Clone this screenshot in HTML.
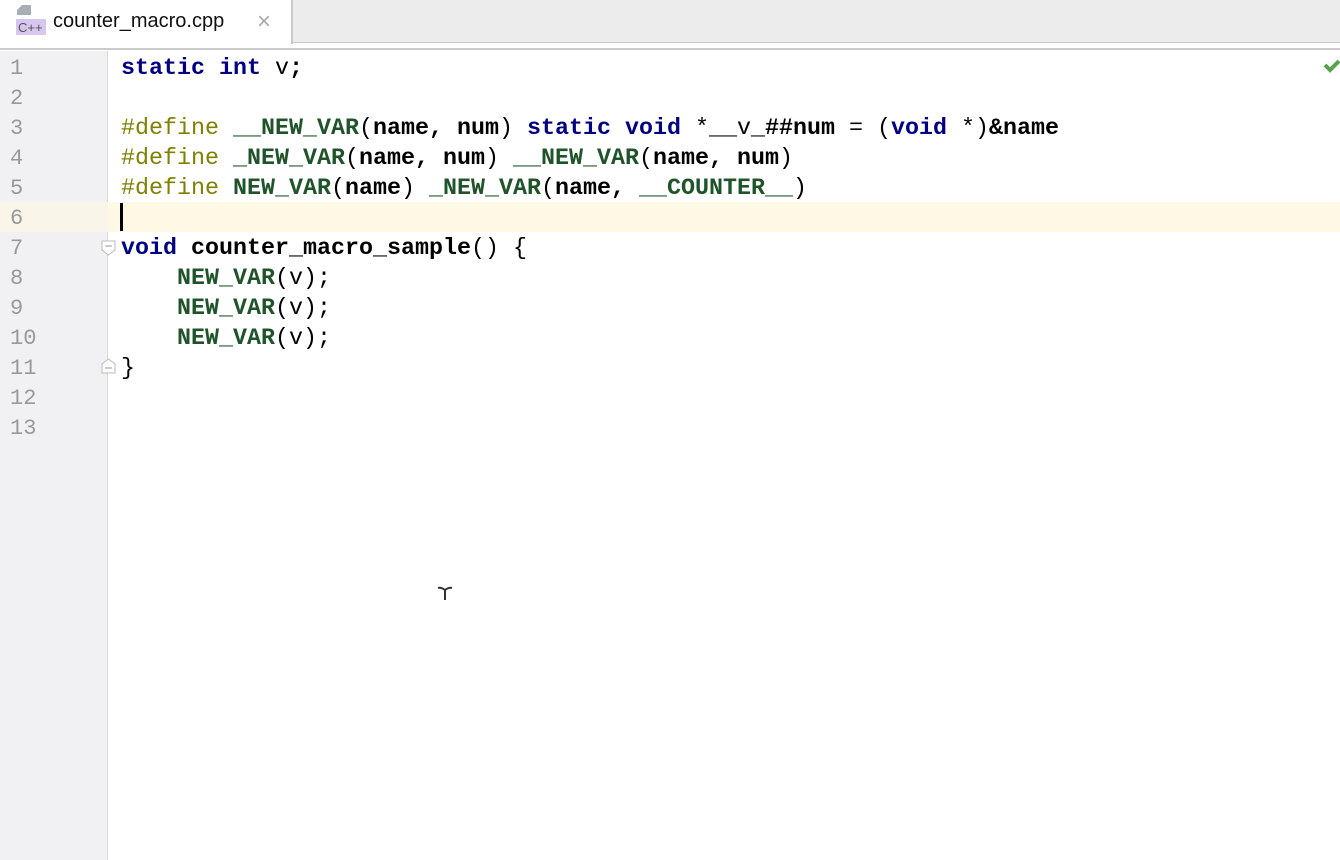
<!DOCTYPE html>
<html><head><meta charset="utf-8"><style>
*{margin:0;padding:0;box-sizing:border-box}
body{width:1340px;height:860px;overflow:hidden;background:#fff;position:relative;font-family:"Liberation Mono",monospace}
.tabbar{position:absolute;left:0;top:0;width:1340px;height:43px;background:#ececec;border-bottom:1px solid #c9c9c9}
.tab{position:absolute;left:0;top:0;width:293px;height:44px;background:#fff;border-right:2px solid #c9c9c9}
.strip{position:absolute;left:0;top:43px;width:1340px;height:7px;background:#fff;border-bottom:2px solid #cbcbcb}
.tab .name{position:absolute;left:53px;top:10px;font:20px "Liberation Sans",sans-serif;color:#111}
.tab .x{position:absolute;left:257px;top:8px;font:24px "Liberation Sans",sans-serif;color:#aaa}
.gutter{position:absolute;left:0;top:51px;width:108px;height:809px;background:#f1f1f3;border-right:1px solid #d8d8d8}
.cur{position:absolute;left:0;top:202px;width:1340px;height:30px;background:#fef8e5}
.gcur{position:absolute;left:0;top:202px;width:108px;height:30px;background:#f9f5e8}
.ln{position:absolute;left:10px;font-size:22px;color:#999;line-height:30px}
.code{position:absolute;left:121px;top:54px;font-size:23.33px;line-height:30px;white-space:pre;color:#000;font-weight:bold}
.k{color:#000080}.d{color:#808000;font-weight:normal}.m{color:#1f542b}.n{font-weight:normal}
.caret{position:absolute;left:120px;top:203px;width:3px;height:28px;background:#000}
.fold{position:absolute;left:101px;width:15px;height:16px}
</style></head><body>
<div class="tabbar"></div>
<div class="strip"></div>
<div class="tab">
<svg style="position:absolute;left:16px;top:4px" width="30" height="32"><polygon points="6,1 15,1 15,11 1,11 1,6" fill="#a9aeb3"/><rect x="0" y="15" width="30" height="16" fill="#d7c6f0"/><text x="2" y="28" font-family="Liberation Sans" font-size="13" fill="#555">C++</text></svg>
<span class="name">counter_macro.cpp</span><span class="x">×</span></div>
<div class="gutter"></div>
<div class="cur"></div><div class="gcur"></div>
<div class="ln" style="top:54px">1</div><div class="ln" style="top:84px">2</div><div class="ln" style="top:114px">3</div><div class="ln" style="top:144px">4</div><div class="ln" style="top:174px">5</div><div class="ln" style="top:204px">6</div><div class="ln" style="top:234px">7</div><div class="ln" style="top:264px">8</div><div class="ln" style="top:294px">9</div><div class="ln" style="top:324px">10</div><div class="ln" style="top:354px">11</div><div class="ln" style="top:384px">12</div><div class="ln" style="top:414px">13</div>
<svg class="fold" style="top:240px" viewBox="0 0 15 16"><path d="M1 1H14V10L7.5 15L1 10Z" fill="#fff" stroke="#bbb"/><path d="M4 6H11" stroke="#999"/></svg>
<svg class="fold" style="top:358px" viewBox="0 0 15 16"><path d="M1 15H14V6L7.5 1L1 6Z" fill="#fff" stroke="#bbb"/><path d="M4 10H11" stroke="#999"/></svg>
<div class="code"><span class="k">static</span> <span class="k">int</span> <span class="n">v</span>;

<span class="d">#define</span> <span class="m">__NEW_VAR</span><span class="n">(</span>name, num<span class="n">)</span> <span class="k">static</span> <span class="k">void</span> <span class="n">*__v_</span>##num <span class="n">=</span> <span class="n">(</span><span class="k">void</span> <span class="n">*)</span>&amp;name
<span class="d">#define</span> <span class="m">_NEW_VAR</span><span class="n">(</span>name, num<span class="n">)</span> <span class="m">__NEW_VAR</span><span class="n">(</span>name, num<span class="n">)</span>
<span class="d">#define</span> <span class="m">NEW_VAR</span><span class="n">(</span>name<span class="n">)</span> <span class="m">_NEW_VAR</span><span class="n">(</span>name, <span class="m">__COUNTER__</span><span class="n">)</span>

<span class="k">void</span> counter_macro_sample<span class="n">() {</span>
    <span class="m">NEW_VAR</span><span class="n">(v);</span>
    <span class="m">NEW_VAR</span><span class="n">(v);</span>
    <span class="m">NEW_VAR</span><span class="n">(v);</span>
<span class="n">}</span>
</div>
<div class="caret"></div>
<svg style="position:absolute;left:1323px;top:58px" width="17" height="16"><path d="M2 7L7 12L16 3" stroke="#59a14f" stroke-width="4" fill="none"/></svg>
<svg style="position:absolute;left:436px;top:585px" width="18" height="18"><path d="M2 3Q5 2 9 5Q13 2 16 3M9 5V15" stroke="#333" stroke-width="2" fill="none"/></svg>
</body></html>
